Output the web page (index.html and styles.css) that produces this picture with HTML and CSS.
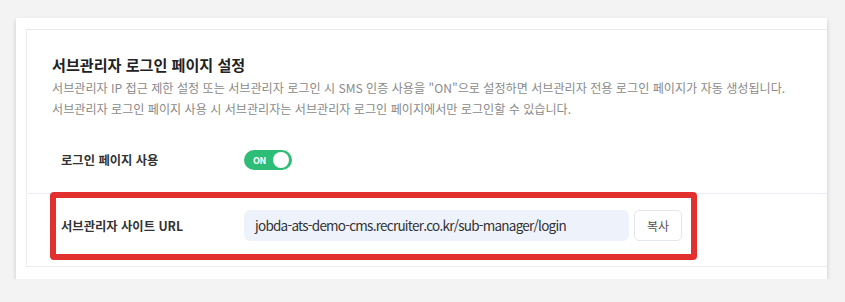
FILE: index.html
```html
<!DOCTYPE html>
<html lang="ko">

<head>
    <meta charset="UTF-8">
    <meta name="viewport" content="width=device-width, initial-scale=1.0">
    <title>서브관리자 로그인 페이지 설정</title>
    <link rel="stylesheet" href="styles.css">
</head>

<body>
    <div class="card">
        <div class="panel">
            <div class="section-head">
                <h2 class="section-title">서브관리자 로그인 페이지 설정</h2>
                <p class="section-desc">서브관리자 IP 접근 제한 설정 또는 서브관리자 로그인 시 SMS 인증 사용을 "ON"으로 설정하면 서브관리자 전용 로그인 페이지가 자동 생성됩니다.<br>서브관리자 로그인 페이지 사용 시 서브관리자는 서브관리자 로그인 페이지에서만 로그인할 수 있습니다.</p>
            </div>

            <div class="row row-toggle">
                <div class="row-label">로그인 페이지 사용</div>
                <label class="toggle">
                    <input type="checkbox" checked>
                    <span class="toggle-track"><span class="toggle-text">ON</span><span class="toggle-knob"></span></span>
                </label>
            </div>

            <div class="row row-url">
                <div class="row-label">서브관리자 사이트 URL</div>
                <div class="url-field">jobda-ats-demo-cms.recruiter.co.kr/sub-manager/login</div>
                <button class="copy-button">복사</button>
                <div class="highlight"></div>
            </div>
        </div>
    </div>
</body>

</html>
```

FILE: styles.css
```css
body {
    margin: 0;
    background: #f3f3f3;
    font-family: "Noto Sans CJK KR", "Noto Sans", sans-serif;
    color: #333;
}

.card {
    margin: 18px 0 0 16px;
    width: 811px;
    height: 261px;
    background: #fff;
    box-shadow: 0 2px 4px rgba(0, 0, 0, 0.18);
    padding: 11px 0 0 10px;
    box-sizing: border-box;
}

.panel {
    border-top: 1px solid #e8e8f2;
    border-left: 1px solid #ececf2;
    border-bottom: 1px solid #ececf4;
}

.section-head {
    padding: 23px 0 0 25px;
}

.section-title {
    margin: 0;
    font-size: 15.1px;
    line-height: 22px;
    font-weight: 700;
    color: #222;
}

.section-desc {
    margin: 2px 0 0;
    font-size: 12.1px;
    line-height: 21px;
    color: #8a8a8a;
}

.row {
    display: flex;
    align-items: center;
    padding-left: 34px;
}

.row-label {
    width: 183px;
    font-size: 12.3px;
    font-weight: 700;
    color: #333;
}

.row-toggle {
    margin-top: 29px;
    height: 24px;
    margin-bottom: 21px;
}

.toggle input {
    display: none;
}

.toggle-track {
    position: relative;
    display: flex;
    align-items: center;
    width: 48px;
    height: 20px;
    border-radius: 10px;
    background: #2dbd77;
    cursor: pointer;
}

.toggle-text {
    margin-left: 9px;
    font-size: 9px;
    font-weight: 700;
    color: #fff;
    letter-spacing: -0.5px;
}

.toggle-knob {
    position: absolute;
    right: 3px;
    top: 2px;
    width: 16px;
    height: 16px;
    border-radius: 50%;
    background: #fff;
}

.row-url {
    position: relative;
    border-top: 1px solid #ececf4;
    padding-top: 16px;
    padding-bottom: 25px;
}

.url-field {
    width: 385px;
    height: 31px;
    box-sizing: border-box;
    padding-left: 11px;
    background: #eef2fa;
    border-radius: 6px;
    font-size: 13.5px;
    letter-spacing: -0.75px;
    line-height: 31px;
    color: #333;
}

.copy-button {
    margin-left: 5px;
    width: 48px;
    height: 31px;
    background: #fff;
    border: 1px solid #e4e6ee;
    border-radius: 5px;
    font-family: inherit;
    font-size: 12px;
    color: #555;
}

.highlight {
    position: absolute;
    left: 23px;
    top: -2px;
    width: 647px;
    height: 68px;
    box-sizing: border-box;
    border: 6px solid #e2302f;
    border-radius: 4px;
    pointer-events: none;
}
```
